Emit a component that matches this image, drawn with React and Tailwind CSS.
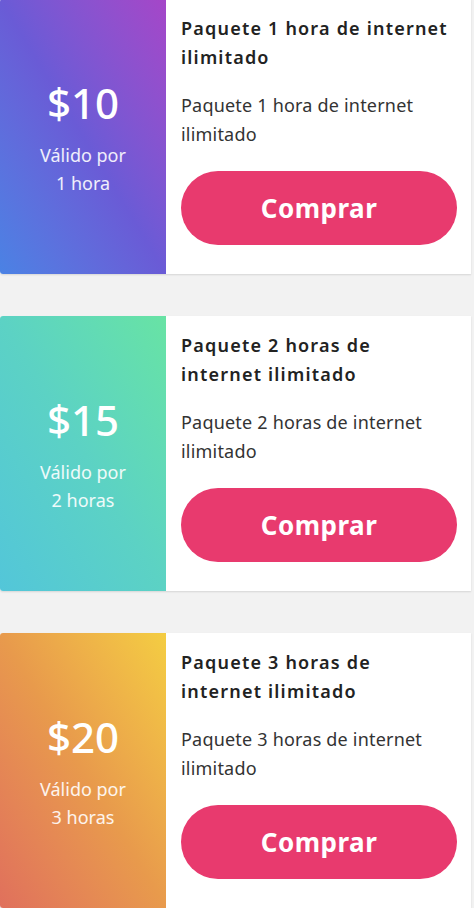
import React from 'react';

const paquetes = [
  {
    id: 1,
    price: '$10',
    valid: '1 hora',
    title: 'Paquete 1 hora de internet ilimitado',
    gradient: 'bg-gradient-to-tr from-[#4a82e4] via-[#6a5bd6] to-[#a546c8]',
  },
  {
    id: 2,
    price: '$15',
    valid: '2 horas',
    title: 'Paquete 2 horas de internet ilimitado',
    gradient: 'bg-gradient-to-tr from-[#53c6d9] via-[#5cd2c4] to-[#68e3a4]',
  },
  {
    id: 3,
    price: '$20',
    valid: '3 horas',
    title: 'Paquete 3 horas de internet ilimitado',
    gradient: 'bg-gradient-to-tr from-[#e0705c] via-[#e89a4c] to-[#f4cd42]',
  },
];

function App() {
  return (
    <div
      className="min-h-[908px] bg-[#f2f2f2] overflow-hidden"
      style={{ fontFamily: '"Noto Sans", "Open Sans", sans-serif' }}
    >
      <div className="flex flex-col gap-[42px] -mt-px pr-[3px]">
        {paquetes.map((p) => (
          <div
            key={p.id}
            className="flex h-[275px] bg-white rounded-l-[3px] overflow-hidden shadow-[0_1px_2px_rgba(0,0,0,0.12)]"
          >
            <div
              className={`w-[166px] shrink-0 flex flex-col items-center justify-center text-white ${p.gradient}`}
            >
              <p className="text-[42px] leading-[52px] font-medium">{p.price}</p>
              <p className="text-[18px] leading-[28px] mt-[12px] text-white/90 text-center">
                Válido por
                <br />
                {p.valid}
              </p>
            </div>
            <div className="flex-1 flex flex-col pl-[15px] pr-[14px] pt-[15px]">
              <h2 className="text-[18px] leading-[29px] font-semibold text-[#222] tracking-[1.2px]">
                {p.title}
              </h2>
              <p className="text-[18px] leading-[29px] text-[#333] mt-[19px] tracking-[0.2px]">
                {p.title}
              </p>
              <button className="mt-[22px] h-[74px] w-full rounded-full bg-[#e83a6e] text-white text-[26px] font-bold tracking-[0.5px]">
                Comprar
              </button>
            </div>
          </div>
        ))}
      </div>
    </div>
  );
}

export default App;
